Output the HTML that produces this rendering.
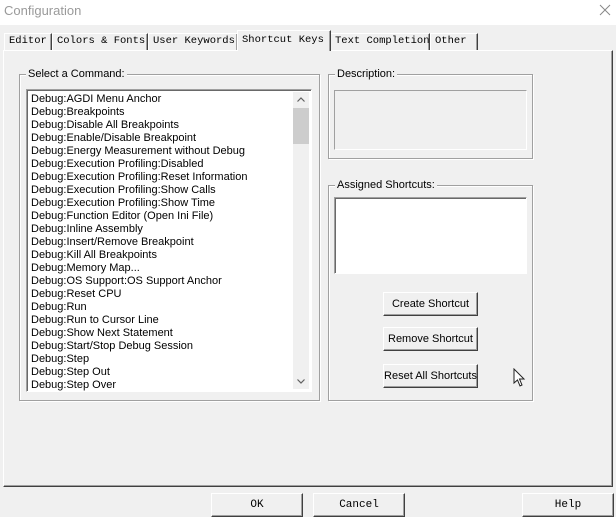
<!DOCTYPE html><html><head><style>
*{box-sizing:border-box;margin:0;padding:0}
body{width:616px;height:517px;background:#f0f0f0;position:relative;overflow:hidden;font-family:"Liberation Sans",sans-serif;font-size:11px;color:#000}
.a{position:absolute}
.title{left:0;top:0;width:616px;height:25px;background:#fff}
.tab{position:absolute;top:33px;height:17px;border:1px solid #fff;border-right:1px solid #404040;border-bottom:none;font-family:"Liberation Mono",monospace;font-size:10.5px;line-height:15px;padding-left:4px;white-space:nowrap;overflow:hidden;box-shadow:inset -1px 0 #a0a0a0}
.grp{position:absolute;border:1px solid #a0a0a0;box-shadow:1px 1px 0 #fff,inset 1px 1px 0 #fff}
.lg{position:absolute;top:-7px;left:6px;background:#f0f0f0;padding:0 2px;font-size:11px;line-height:13px}
.box{position:absolute;background:#fff;border:1px solid #a0a0a0;border-right-color:#fff;border-bottom-color:#fff;box-shadow:inset 1px 1px 0 #696969}
.btn{position:absolute;background:#f0f0f0;border:1px solid #fff;border-right-color:#404040;border-bottom-color:#404040;box-shadow:inset -1px -1px 0 #a0a0a0;text-align:center;font-size:11px}
.bb{font-family:"Liberation Mono",monospace;line-height:22px}
.it{height:13px;line-height:13px;padding-left:3px;white-space:nowrap}
</style></head><body>
<div class="a title"></div>
<div class="a" style="left:4px;top:3px;font-size:13px;color:#9a9a9a">Configuration</div>
<svg class="a" style="left:599px;top:4px" width="12" height="12"><path d="M1 1L11 11M11 1L1 11" stroke="#888" stroke-width="1"/></svg>
<div class="a" style="left:3px;top:50px;width:610px;height:437px;border:1px solid #fff;border-right-color:#404040;border-bottom-color:#404040;box-shadow:inset -1px -1px 0 #a0a0a0"></div>
<div class="tab" style="left:4px;width:48px">Editor</div>
<div class="tab" style="left:52px;width:96px">Colors &amp; Fonts</div>
<div class="tab" style="left:148px;width:90px">User Keywords</div>
<div class="tab" style="left:330px;width:100px">Text Completion</div>
<div class="tab" style="left:430px;width:48px">Other</div>
<div class="tab" style="left:237px;top:30px;height:21px;width:94px;background:#f0f0f0;line-height:19px">Shortcut Keys</div>

<div class="grp" style="left:19px;top:74px;width:301px;height:327px"><span class="lg">Select a Command:</span></div>
<div class="box" style="left:26px;top:89px;width:286px;height:303px;padding:3px 0 0 1px">
<div class="a" style="right:2px;top:2px;width:16px;height:297px;background:#f0f0f0"></div>
<div class="a" style="right:2px;top:18px;width:16px;height:36px;background:#cdcdcd"></div>
<svg class="a" style="right:6px;top:7px" width="8" height="5"><path d="M0.5 4.5L4 1L7.5 4.5" fill="none" stroke="#606060" stroke-width="1.2"/></svg>
<svg class="a" style="right:6px;bottom:7px" width="8" height="5"><path d="M0.5 0.5L4 4L7.5 0.5" fill="none" stroke="#606060" stroke-width="1.2"/></svg>
<div class="it">Debug:AGDI Menu Anchor</div><div class="it">Debug:Breakpoints</div><div class="it">Debug:Disable All Breakpoints</div><div class="it">Debug:Enable/Disable Breakpoint</div><div class="it">Debug:Energy Measurement without Debug</div><div class="it">Debug:Execution Profiling:Disabled</div><div class="it">Debug:Execution Profiling:Reset Information</div><div class="it">Debug:Execution Profiling:Show Calls</div><div class="it">Debug:Execution Profiling:Show Time</div><div class="it">Debug:Function Editor (Open Ini File)</div><div class="it">Debug:Inline Assembly</div><div class="it">Debug:Insert/Remove Breakpoint</div><div class="it">Debug:Kill All Breakpoints</div><div class="it">Debug:Memory Map...</div><div class="it">Debug:OS Support:OS Support Anchor</div><div class="it">Debug:Reset CPU</div><div class="it">Debug:Run</div><div class="it">Debug:Run to Cursor Line</div><div class="it">Debug:Show Next Statement</div><div class="it">Debug:Start/Stop Debug Session</div><div class="it">Debug:Step</div><div class="it">Debug:Step Out</div><div class="it">Debug:Step Over</div>
</div>

<div class="grp" style="left:328px;top:74px;width:205px;height:85px"><span class="lg">Description:</span></div>
<div class="a" style="left:334px;top:90px;width:193px;height:60px;border:1px solid #a0a0a0;border-right-color:#fff;border-bottom-color:#fff"></div>
<div class="grp" style="left:328px;top:185px;width:205px;height:216px"><span class="lg">Assigned Shortcuts:</span></div>
<div class="box" style="left:334px;top:197px;width:193px;height:77px"></div>
<div class="btn" style="left:383px;top:292px;width:95px;height:24px;line-height:22px">Create Shortcut</div>
<div class="btn" style="left:383px;top:327px;width:95px;height:24px;line-height:22px">Remove Shortcut</div>
<div class="btn" style="left:383px;top:364px;width:95px;height:24px;line-height:22px">Reset All Shortcuts</div>
<svg class="a" style="left:513px;top:368px" width="14" height="20"><path d="M1 1 L1 15 L4.5 12 L7 18 L9 17 L6.5 11 L11 11 Z" fill="#fff" stroke="#222" stroke-width="1"/></svg>

<div class="btn bb" style="left:211px;top:493px;width:92px;height:24px">OK</div>
<div class="btn bb" style="left:313px;top:493px;width:92px;height:24px">Cancel</div>
<div class="btn bb" style="left:522px;top:493px;width:92px;height:24px">Help</div>
</body></html>
